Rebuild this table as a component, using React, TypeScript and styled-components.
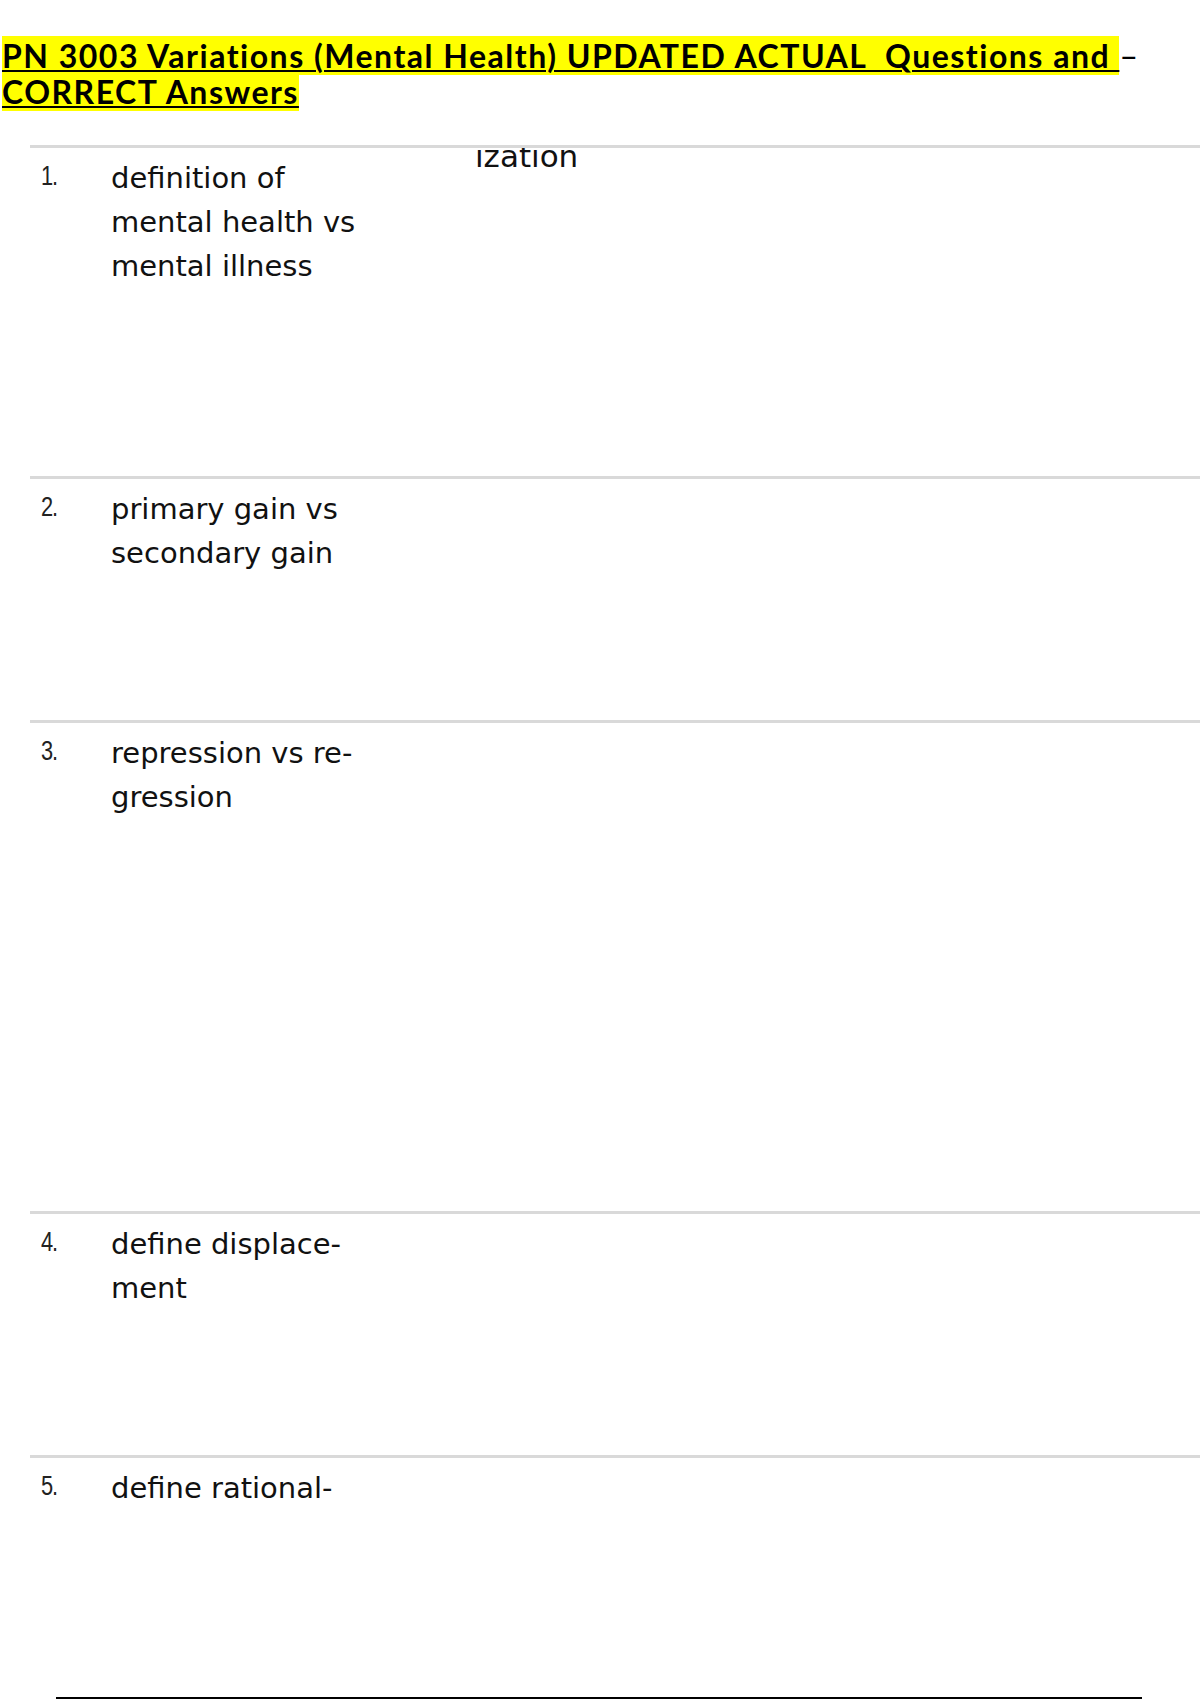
import React from 'react';
import styled, { createGlobalStyle } from 'styled-components';

type Item = {
  num: string,
  lines: string[],
  height: number,
  answer?: string,
}

const items: Item[] = [
  { num: '1.', lines: ['definition of', 'mental health vs', 'mental illness'], height: 331, answer: 'ization' },
  { num: '2.', lines: ['primary gain vs', 'secondary gain'], height: 244 },
  { num: '3.', lines: ['repression vs re-', 'gression'], height: 491 },
  { num: '4.', lines: ['define displace-', 'ment'], height: 244 },
  { num: '5.', lines: ['define rational-'], height: 242 },
];

const GlobalStyle = createGlobalStyle`
  html, body {
    margin: 0;
    padding: 0;
    background: #ffffff;
  }
  body {
    font-family: "DejaVu Sans", Verdana, sans-serif;
    color: #111;
  }
`;

export default function App() {
  return (
    <>
      <GlobalStyle />
      <Page>
        <Title>
          <TitleLine>
            <Mark>PN 3003 Variations (Mental Health) UPDATED ACTUAL&nbsp; Questions and </Mark>
            <Dash>–</Dash>
          </TitleLine>
          <TitleLine>
            <Mark>CORRECT Answers</Mark>
          </TitleLine>
        </Title>

        <List>
          {items.map((item) => (
            <Row key={item.num} $height={item.height}>
              <Num>{item.num}</Num>
              <Term>
                {item.lines.map((l) => (
                  <TermLine key={l}>{l}</TermLine>
                ))}
              </Term>
              <AnswerClip>
                {item.answer && <Answer>{item.answer}</Answer>}
              </AnswerClip>
            </Row>
          ))}
        </List>

        <Footer />
      </Page>
    </>
  );
}

const Page = styled.div`
  width: 1200px;
  height: 1700px;
  overflow: hidden;
  padding-top: 38px;
  box-sizing: border-box;
`;

const Title = styled.div`
  font-family: Lato, "Liberation Sans", sans-serif;
  font-weight: 700;
  font-size: 32px;
  letter-spacing: 1.5px;
  line-height: 36px;
  color: #000;
  padding-left: 2px;
`;

const TitleLine = styled.div`
  white-space: nowrap;
`;

const Mark = styled.span`
  background: #ffff00;
  text-decoration: underline;
  text-decoration-thickness: 2px;
  text-underline-offset: 2px;
`;

const Dash = styled.span`
  font-weight: 400;
  letter-spacing: 0;
`;

const List = styled.div`
  margin-top: 35px;
  margin-left: 30px;
`;

const Row = styled.div<{ $height: number }>`
  display: grid;
  grid-template-columns: 70px 364px 1fr;
  align-items: start;
  height: ${(p) => p.$height}px;
  box-sizing: border-box;
  border-top: 3px solid #d9d9d9;
  padding-left: 11px;
`;

const Num = styled.div`
  font-family: "Liberation Sans", Arial, sans-serif;
  font-size: 28px;
  letter-spacing: -1.5px;
  line-height: 44px;
  color: #222;
  padding-top: 6px;
  transform: scaleX(0.78);
  transform-origin: left center;
`;

const Term = styled.div`
  font-family: "DejaVu Sans", Verdana, sans-serif;
  font-size: 29px;
  line-height: 44px;
  color: #111;
  padding-top: 8px;
`;

const TermLine = styled.div`
  white-space: nowrap;
`;

const AnswerClip = styled.div`
  overflow: hidden;
  height: 40px;
`;

const Answer = styled.div`
  font-family: "DejaVu Sans", Verdana, sans-serif;
  font-size: 31px;
  line-height: 44px;
  color: #111;
  margin-top: -14px;
`;

const Footer = styled.div`
  margin: 0 0 0 56px;
  width: 1086px;
  height: 2px;
  background: #000;
`;
